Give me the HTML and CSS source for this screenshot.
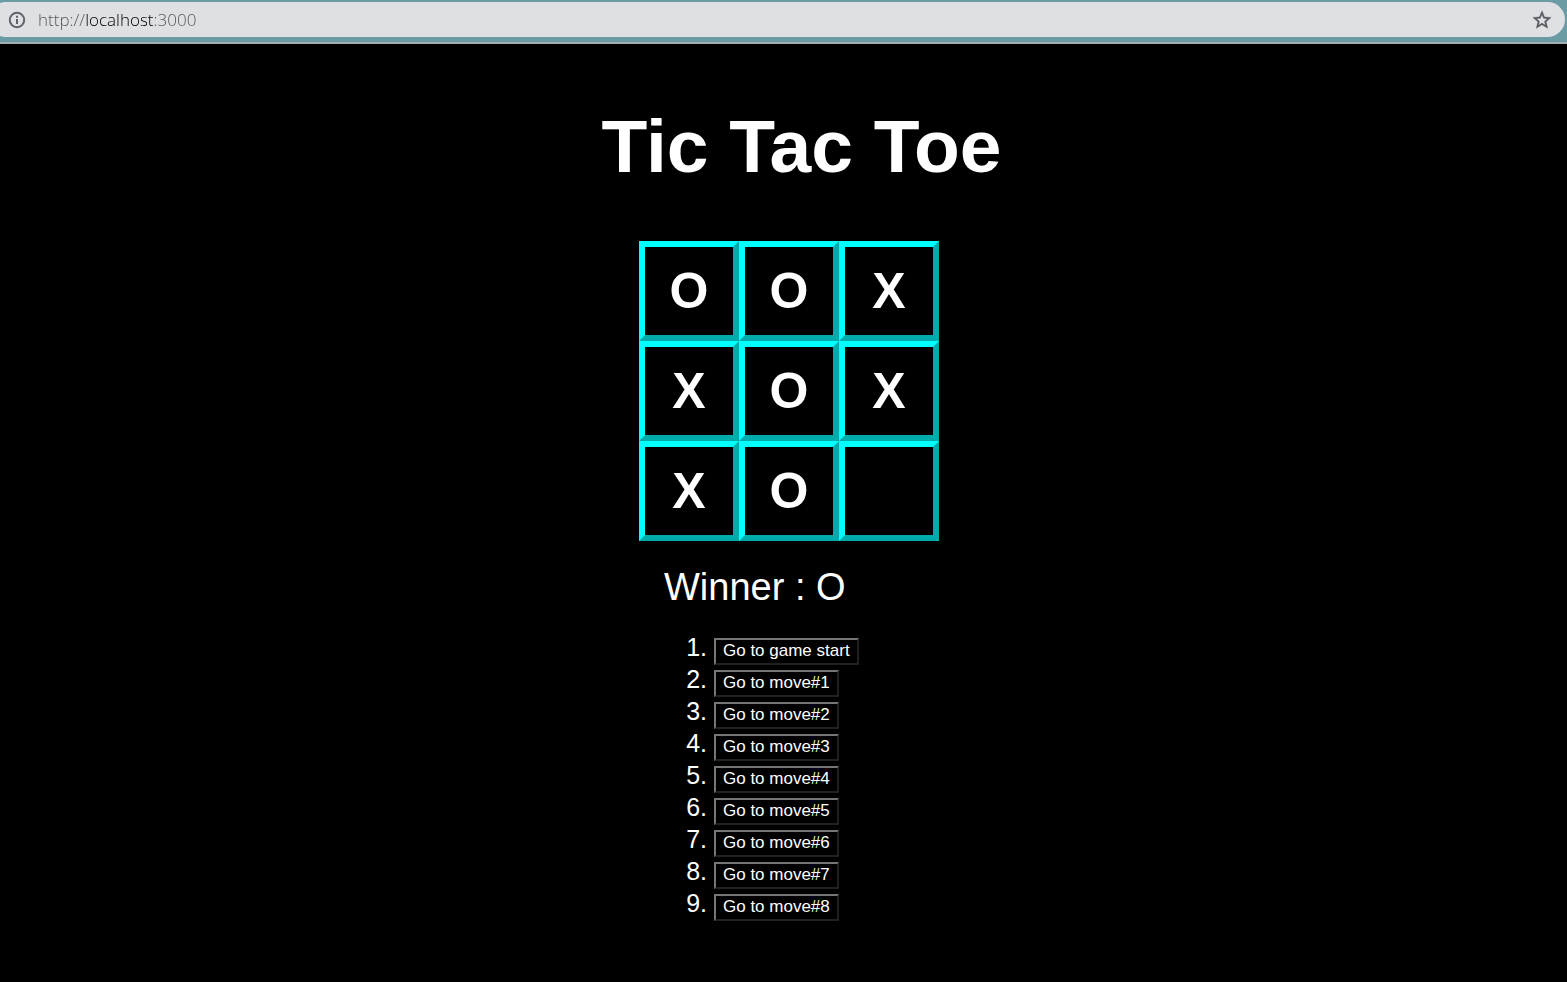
FILE: index.html
```html
<!DOCTYPE html>
<html lang="en">
<head>
  <meta charset="utf-8">
  <title>Tic Tac Toe</title>
  <link rel="stylesheet" href="styles.css">
</head>
<body>
  <header class="toolbar">
    <div class="omnibox">
      <button class="icon-button" type="button" aria-label="Site information">
        <svg width="18" height="18" viewBox="0 0 18 18" fill="none" stroke="#5f6368" stroke-width="2">
          <circle cx="9" cy="9" r="7.2"/>
          <path d="M9 8v5M9 4.8v2"/>
        </svg>
      </button>
      <input class="address" type="text" aria-label="Address" value="http://localhost:3000" spellcheck="false">
      <button class="icon-button" type="button" aria-label="Bookmark this page">
        <svg width="22" height="22" viewBox="0 0 24 24" fill="#55585c" stroke="#55585c" stroke-width="0.4">
          <path d="M22 9.24l-7.19-.62L12 2 9.19 8.63 2 9.24l5.46 4.73L5.82 21 12 17.27 18.18 21l-1.63-7.03L22 9.24zM12 15.4l-3.76 2.27 1-4.28-3.32-2.88 4.38-.38L12 6.1l1.71 4.04 4.38.38-3.32 2.88 1 4.28L12 15.4z"/>
        </svg>
      </button>
    </div>
  </header>
  <main class="page">
    <h1 class="title">Tic Tac Toe</h1>
    <div class="game">
      <div class="board">
        <button class="square" type="button">O</button>
        <button class="square" type="button">O</button>
        <button class="square" type="button">X</button>
        <button class="square" type="button">X</button>
        <button class="square" type="button">O</button>
        <button class="square" type="button">X</button>
        <button class="square" type="button">X</button>
        <button class="square" type="button">O</button>
        <button class="square" type="button" aria-label="Empty square"></button>
      </div>
      <section class="info">
        <div class="status">Winner : O</div>
        <ol class="moves">
          <li><button class="move" type="button">Go to game start</button></li>
          <li><button class="move" type="button">Go to move#1</button></li>
          <li><button class="move" type="button">Go to move#2</button></li>
          <li><button class="move" type="button">Go to move#3</button></li>
          <li><button class="move" type="button">Go to move#4</button></li>
          <li><button class="move" type="button">Go to move#5</button></li>
          <li><button class="move" type="button">Go to move#6</button></li>
          <li><button class="move" type="button">Go to move#7</button></li>
          <li><button class="move" type="button">Go to move#8</button></li>
        </ol>
      </section>
    </div>
  </main>
</body>
</html>
```
FILE: styles.css
```css
* {
  box-sizing: border-box;
}

body {
  margin: 0;
  min-height: 100vh;
  background: #000;
  color: #fff;
  font-family: "Liberation Sans", Arial, sans-serif;
}

.toolbar {
  padding: 2px 2px 5px 0;
  background: #6b9ba4;
  border-bottom: 2px solid #a3acad;
}

.omnibox {
  display: flex;
  align-items: center;
  height: 35px;
  margin-left: -12px;
  padding: 0 12px 0 20px;
  border-radius: 18px;
  background: #dfe0e3;
}

.icon-button {
  display: flex;
  padding: 0;
  border: 0;
  background: none;
}

.address {
  flex: 1;
  min-width: 0;
  margin-left: 12px;
  padding: 0;
  border: 0;
  outline: 0;
  font-family: "Open Sans", sans-serif;
  font-size: 17px;
  font-weight: 300;
  color: transparent;
  background: linear-gradient(90deg, #505356 48px, #000 48px, #000 116px, #505356 116px);
  background-clip: text;
  -webkit-background-clip: text;
}

.page {
  padding-top: 59px;
}

.title {
  margin: 0 0 51px;
  padding-left: 36px;
  font-size: 75px;
  line-height: 87px;
  text-align: center;
}

.game {
  display: flex;
  flex-direction: column;
  width: 300px;
  margin: 0 auto;
  box-sizing: content-box;
  padding-left: 11px;
}

.board {
  display: grid;
  grid-template-columns: repeat(3, 100px);
  grid-auto-rows: 100px;
}

.square {
  padding: 0;
  border: 6px outset #0ff;
  background: #000;
  color: #fff;
  font: bold 50px "Liberation Sans", Arial, sans-serif;
}

.info {
  margin-left: 25px;
}

.status {
  margin-top: 24px;
  font-size: 38px;
  line-height: 44px;
}

.moves {
  margin: 24px 0;
  padding-left: 50px;
  font-size: 25px;
  line-height: 28px;
}

.moves li {
  height: 32px;
}

.move {
  height: 27px;
  padding: 0 7px;
  border: 2px outset #767676;
  background: #000;
  color: #fff;
  font: 17px "Liberation Sans", Arial, sans-serif;
}
```
